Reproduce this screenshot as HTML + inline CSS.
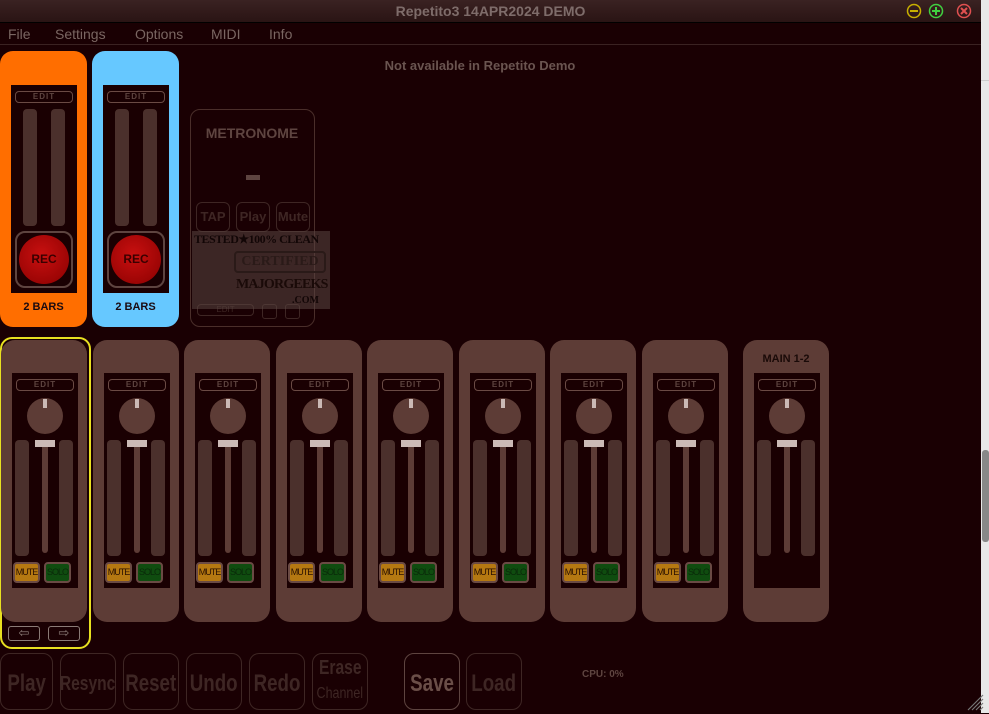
<!DOCTYPE html>
<html><head><meta charset="utf-8"><style>
*{margin:0;padding:0;box-sizing:border-box}
body{width:989px;height:713px;background:#1a0003;font-family:"Liberation Sans","DejaVu Sans",sans-serif;position:relative;overflow:hidden}
.a{position:absolute}
#title{left:0;top:0;width:981px;height:23px;background:linear-gradient(#3a2222,#2a1414);color:#7e6c6a;font-size:14px;font-weight:bold;text-align:center;line-height:22px;border-bottom:1px solid #000}
#menu{left:0;top:23px;width:981px;height:22px;border-bottom:1px solid #3a2222;color:#7a6662;font-size:14px;line-height:22px}
#menu span{position:absolute;top:0}
#sb{left:981px;top:0;width:8px;height:713px;background:#e8e8e8}
.strip{position:absolute;top:340px;width:86px;height:282px;border-radius:14px;background:#5d3c36}
.inner{position:absolute;left:11px;top:33px;width:66px;height:215px;background:#1a0002}
.edit{position:absolute;left:4px;top:6px;width:58px;height:12px;border:1.5px solid #6a4a44;border-radius:4px;color:#5e4440;font-size:8px;font-weight:bold;text-align:center;line-height:9px;letter-spacing:1px}
.knob{position:absolute;left:15px;top:25px;width:36px;height:36px;border-radius:50%;background:#5d3c36}
.knob:after{content:"";position:absolute;left:16px;top:1px;width:4px;height:9px;background:#cbbab6}
.m{position:absolute;top:67px;width:14px;height:116px;background:#4b302c;border-radius:4px}
.tr{position:absolute;left:30px;top:70px;width:6px;height:110px;background:#5d3c36;border-radius:3px}
.hd{position:absolute;left:23px;top:67px;width:20px;height:7px;background:#cbbab6}
.mute,.solo{position:absolute;top:189px;width:27px;height:21px;border:2px solid #6a4a44;border-radius:4px;font-size:9px;text-align:center;line-height:17px;color:#2a1000;overflow:hidden;letter-spacing:-1px}
.mute{left:1px;background:#b57811}
.solo{left:32px;background:#0f4c0f;color:#0a2a0a}
.loop{position:absolute;top:51px;width:87px;height:276px;border-radius:13px}
.lin{position:absolute;left:11px;top:34px;width:66px;height:208px;background:#1a0002}
.lm{position:absolute;top:24px;width:14px;height:117px;background:#4b302c;border-radius:4px}
.recb{position:absolute;left:4px;top:146px;width:58px;height:57px;border:2px solid #5e4440;border-radius:10px}
.rec{position:absolute;left:2px;top:2px;width:50px;height:49px;border-radius:50%;background:radial-gradient(circle at 45% 40%,#c81010,#8a0000);color:#3a0000;font-weight:bold;font-size:12px;text-align:center;line-height:49px}
.bars{position:absolute;left:0;width:87px;top:250px;text-align:center;font-weight:bold;font-size:11px;color:#1a0a10}
.bb{position:absolute;top:653px;height:57px;border:1.5px solid #3e2624;border-radius:10px;color:#3e2624;font-weight:bold;text-align:center;font-size:24px;line-height:60px;white-space:nowrap}
.bb span{display:inline-block;transform:scaleX(.78);margin:0 -20px}
</style></head><body>
<div class="a" id="title">Repetito3 14APR2024 DEMO</div>
<svg class="a" style="left:904px;top:2px" width="70" height="18">
<circle cx="10" cy="9" r="6.5" fill="none" stroke="#c8b000" stroke-width="1.5"/><rect x="6" y="8" width="8" height="2" fill="#c8b000"/>
<circle cx="32" cy="9" r="6.5" fill="none" stroke="#40d040" stroke-width="1.5"/><path d="M28 9h8M32 5v8" stroke="#40d040" stroke-width="2"/>
<circle cx="60" cy="9" r="6.5" fill="none" stroke="#e05050" stroke-width="1.5"/><path d="M57 6l6 6M63 6l-6 6" stroke="#e05050" stroke-width="2"/>
</svg>
<div class="a" id="menu"><span style="left:8px">File</span><span style="left:55px">Settings</span><span style="left:135px">Options</span><span style="left:211px">MIDI</span><span style="left:269px">Info</span></div>
<div class="a" id="sb"></div>
<div class="a" style="left:981px;top:80px;width:8px;height:1px;background:#ccc"></div>
<div class="a" style="left:982px;top:450px;width:7px;height:92px;background:#888;border-radius:3px"></div>
<div class="a" style="left:0;top:58px;width:960px;text-align:center;color:#6a5450;font-size:13px;font-weight:bold">Not available in Repetito Demo</div>

<div class="loop" style="left:0;background:#ff6e00"><div class="lin"><div class="edit">EDIT</div><div class="lm" style="left:12px"></div><div class="lm" style="left:40px"></div><div class="recb"><div class="rec">REC</div></div></div><div class="bars">2 BARS</div></div>
<div class="loop" style="left:92px;background:#66c8ff"><div class="lin"><div class="edit">EDIT</div><div class="lm" style="left:12px"></div><div class="lm" style="left:40px"></div><div class="recb"><div class="rec">REC</div></div></div><div class="bars">2 BARS</div></div>

<div class="a" style="left:190px;top:109px;width:125px;height:218px;border:1.5px solid #4a2e2a;border-radius:10px">
<div class="a" style="left:0;top:15px;width:122px;text-align:center;color:#5e4440;font-weight:bold;font-size:14px">METRONOME</div>
<div class="a" style="left:55px;top:65px;width:14px;height:5px;background:#5e4440"></div>
<div class="a" style="left:5px;top:92px;width:34px;height:30px;border:1.5px solid #3e2624;border-radius:6px;color:#3e2624;font-weight:bold;font-size:13px;text-align:center;line-height:28px">TAP</div>
<div class="a" style="left:45px;top:92px;width:34px;height:30px;border:1.5px solid #3e2624;border-radius:6px;color:#3e2624;font-weight:bold;font-size:13px;text-align:center;line-height:28px">Play</div>
<div class="a" style="left:85px;top:92px;width:34px;height:30px;border:1.5px solid #3e2624;border-radius:6px;color:#3e2624;font-weight:bold;font-size:13px;text-align:center;line-height:28px">Mute</div>
<div class="a" style="left:6px;top:194px;width:57px;height:12px;border:1.5px solid #3e2624;border-radius:4px;color:#3e2624;font-size:8px;text-align:center;line-height:9px">EDIT</div>
<div class="a" style="left:71px;top:194px;width:15px;height:15px;border:1.5px solid #3e2624;border-radius:3px"></div>
<div class="a" style="left:94px;top:194px;width:15px;height:15px;border:1.5px solid #3e2624;border-radius:3px"></div>
</div>
<div class="a" style="left:192px;top:231px;width:138px;height:78px;background:rgba(90,70,66,.55);font-family:'Liberation Serif',serif;font-weight:bold;color:#120606;overflow:hidden">
<div class="a" style="left:2px;top:1px;font-size:12px;letter-spacing:-.5px">TESTED★100% CLEAN</div>
<div class="a" style="left:42px;top:20px;width:92px;height:22px;border:2px solid #2a1a18;border-radius:4px;font-size:14px;text-align:center;line-height:18px;color:#2a1a18">CERTIFIED</div>
<div class="a" style="left:44px;top:46px;font-size:14px;color:#1a0a08;letter-spacing:-.8px">MAJORGEEKS</div>
<div class="a" style="left:100px;top:64px;font-size:10px">.COM</div>
</div>

<div class="a" style="left:0;top:337px;width:91px;height:312px;border:2px solid #e8e020;border-radius:12px"></div>
<div class="a" style="left:8px;top:626px;width:32px;height:15px;border:1.5px solid #8a7a76;border-radius:3px;color:#8a7a76;font-size:13px;line-height:11px;text-align:center">⇦</div>
<div class="a" style="left:48px;top:626px;width:32px;height:15px;border:1.5px solid #8a7a76;border-radius:3px;color:#8a7a76;font-size:13px;line-height:11px;text-align:center">⇨</div>

<div class="strip" style="left:1px"><div class="inner"><div class="edit">EDIT</div><div class="knob"></div><div class="m" style="left:3px"></div><div class="m" style="left:47px"></div><div class="tr"></div><div class="hd"></div><div class="mute">MUTE</div><div class="solo">SOLO</div></div></div>
<div class="strip" style="left:93px"><div class="inner"><div class="edit">EDIT</div><div class="knob"></div><div class="m" style="left:3px"></div><div class="m" style="left:47px"></div><div class="tr"></div><div class="hd"></div><div class="mute">MUTE</div><div class="solo">SOLO</div></div></div>
<div class="strip" style="left:184px"><div class="inner"><div class="edit">EDIT</div><div class="knob"></div><div class="m" style="left:3px"></div><div class="m" style="left:47px"></div><div class="tr"></div><div class="hd"></div><div class="mute">MUTE</div><div class="solo">SOLO</div></div></div>
<div class="strip" style="left:276px"><div class="inner"><div class="edit">EDIT</div><div class="knob"></div><div class="m" style="left:3px"></div><div class="m" style="left:47px"></div><div class="tr"></div><div class="hd"></div><div class="mute">MUTE</div><div class="solo">SOLO</div></div></div>
<div class="strip" style="left:367px"><div class="inner"><div class="edit">EDIT</div><div class="knob"></div><div class="m" style="left:3px"></div><div class="m" style="left:47px"></div><div class="tr"></div><div class="hd"></div><div class="mute">MUTE</div><div class="solo">SOLO</div></div></div>
<div class="strip" style="left:459px"><div class="inner"><div class="edit">EDIT</div><div class="knob"></div><div class="m" style="left:3px"></div><div class="m" style="left:47px"></div><div class="tr"></div><div class="hd"></div><div class="mute">MUTE</div><div class="solo">SOLO</div></div></div>
<div class="strip" style="left:550px"><div class="inner"><div class="edit">EDIT</div><div class="knob"></div><div class="m" style="left:3px"></div><div class="m" style="left:47px"></div><div class="tr"></div><div class="hd"></div><div class="mute">MUTE</div><div class="solo">SOLO</div></div></div>
<div class="strip" style="left:642px"><div class="inner"><div class="edit">EDIT</div><div class="knob"></div><div class="m" style="left:3px"></div><div class="m" style="left:47px"></div><div class="tr"></div><div class="hd"></div><div class="mute">MUTE</div><div class="solo">SOLO</div></div></div>
<div class="strip" style="left:743px"><div class="a" style="left:0;top:13px;width:86px;text-align:center;font-size:11px;font-weight:bold;color:#1a0a08">MAIN 1-2</div><div class="inner"><div class="edit">EDIT</div><div class="knob"></div><div class="m" style="left:3px"></div><div class="m" style="left:47px"></div><div class="tr"></div><div class="hd"></div></div></div>

<div class="bb" style="left:0;width:53px"><span>Play</span></div>
<div class="bb" style="left:60px;width:56px;font-size:20px"><span>Resync</span></div>
<div class="bb" style="left:123px;width:56px"><span>Reset</span></div>
<div class="bb" style="left:186px;width:56px"><span>Undo</span></div>
<div class="bb" style="left:249px;width:56px"><span>Redo</span></div>
<div class="bb" style="left:312px;width:56px;font-size:20px;line-height:24px;padding-top:2px"><span>Erase</span><br><span style="font-size:16px;font-weight:normal">Channel</span></div>
<div class="bb" style="left:404px;width:56px;border-color:#5e4440;color:#6a4e48"><span>Save</span></div>
<div class="bb" style="left:466px;width:56px"><span>Load</span></div>
<div class="a" style="left:582px;top:669px;color:#5e4440;font-size:10px;font-weight:bold">CPU: 0%</div>
<svg class="a" style="left:966px;top:693px" width="18" height="18"><path d="M2 17L17 2M6 17L17 6M10 17L17 10M14 17L17 14" stroke="#777" stroke-width="1.2"/></svg>
</body></html>
